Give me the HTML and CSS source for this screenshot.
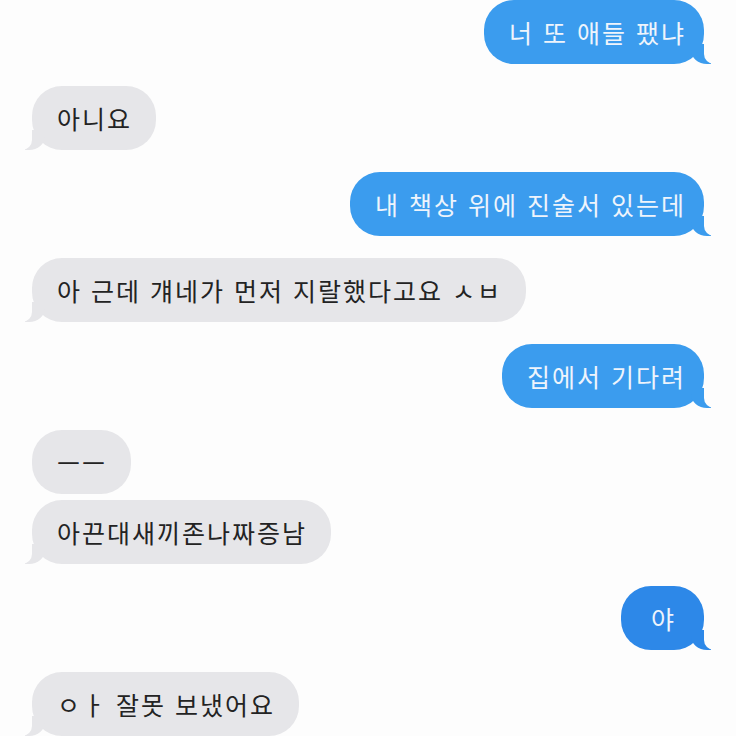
FILE: index.html
```html
<!DOCTYPE html>
<html lang="ko">
<head>
<meta charset="utf-8">
<link rel="stylesheet" href="styles.css">
</head>
<body>
<div class="chat">
  <div class="msg sent tail">너 또 애들 팼냐</div>
  <div class="msg recv tail">아니요</div>
  <div class="msg sent tail">내 책상 위에 진술서 있는데</div>
  <div class="msg recv tail">아 근데 걔네가 먼저 지랄했다고요 ㅅㅂ</div>
  <div class="msg sent tail">집에서 기다려</div>
  <div class="msg recv grouped">ㅡㅡ</div>
  <div class="msg recv tail">아끈대새끼존나짜증남</div>
  <div class="msg sent deep tail">야</div>
  <div class="msg recv tail">ㅇㅏ 잘못 보냈어요</div>
</div>
</body>
</html>
```
FILE: styles.css
```css
html, body {
  margin: 0;
  padding: 0;
  background: #fdfdfd;
}
body {
  width: 736px;
  height: 736px;
  overflow: hidden;
  font-family: "Noto Sans CJK KR", "Noto Sans", sans-serif;
}
.chat {
  display: flex;
  flex-direction: column;
  gap: 22px;
  padding: 0 32px;
}
.msg {
  position: relative;
  font-size: 25px;
  line-height: 32px;
  letter-spacing: 2px;
  padding: 16px 24px 16px 25px;
  border-radius: 30px;
  max-width: 560px;
}
.sent {
  align-self: flex-end;
  background: #3b9cee;
  color: #eef4fc;
  padding: 16px 18px 16px 25px;
}
.sent.deep {
  background: #2d88e8;
  padding: 16px 28px 16px 30px;
}
.recv {
  align-self: flex-start;
  background: #e6e6e9;
  color: #232323;
}
.recv.grouped {
  margin-bottom: -16px;
}
.msg.tail::before,
.msg.tail::after {
  content: "";
  position: absolute;
  bottom: 0;
  height: 20px;
}
.sent.tail::before {
  right: -7px;
  width: 20px;
  background: inherit;
  border-bottom-left-radius: 16px 14px;
}
.sent.tail::after {
  right: -24px;
  width: 24px;
  background: #fdfdfd;
  border-bottom-left-radius: 10px;
}
.recv.tail::before {
  left: -7px;
  width: 20px;
  background: inherit;
  border-bottom-right-radius: 16px 14px;
}
.recv.tail::after {
  left: -24px;
  width: 24px;
  background: #fdfdfd;
  border-bottom-right-radius: 10px;
}
```
